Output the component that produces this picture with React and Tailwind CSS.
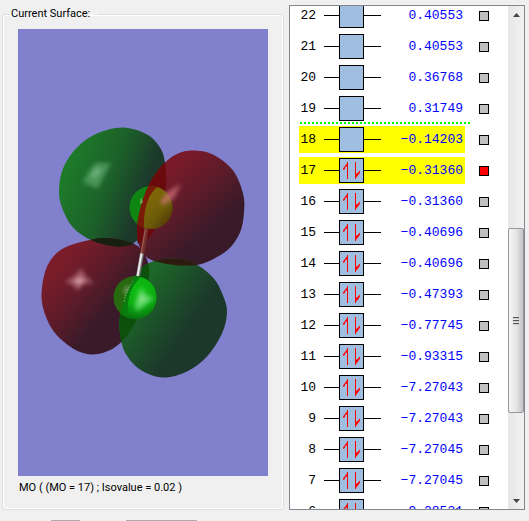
import { useState } from "react";

const ORBITALS = [
  { mo: 22, energy: "0.40553", electrons: 0 },
  { mo: 21, energy: "0.40553", electrons: 0 },
  { mo: 20, energy: "0.36768", electrons: 0 },
  { mo: 19, energy: "0.31749", electrons: 0 },
  { mo: 18, energy: "−0.14203", electrons: 0 },
  { mo: 17, energy: "−0.31360", electrons: 2 },
  { mo: 16, energy: "−0.31360", electrons: 2 },
  { mo: 15, energy: "−0.40696", electrons: 2 },
  { mo: 14, energy: "−0.40696", electrons: 2 },
  { mo: 13, energy: "−0.47393", electrons: 2 },
  { mo: 12, energy: "−0.77745", electrons: 2 },
  { mo: 11, energy: "−0.93315", electrons: 2 },
  { mo: 10, energy: "−7.27043", electrons: 2 },
  { mo: 9, energy: "−7.27043", electrons: 2 },
  { mo: 8, energy: "−7.27045", electrons: 2 },
  { mo: 7, energy: "−7.27045", electrons: 2 },
  { mo: 6, energy: "−9.28531", electrons: 2 },
];

const HIGHLIGHTED = [17, 18];

// outlines of the four lobes
const LOBES = {
  greenTop: [[123, 127], [147, 134], [160, 147], [165, 162], [166, 185], [162, 210], [154, 230], [145, 240], [133, 244], [115, 246], [92, 240], [73, 227], [62, 207], [59, 190], [63, 168], [77, 147], [97, 133]],
  redTop: [[193, 150], [213, 154], [233, 170], [243, 193], [244, 212], [240, 232], [227, 250], [203, 263], [182, 265], [160, 262], [147, 257], [139, 245], [137, 228], [139, 213], [145, 193], [153, 177], [165, 162], [178, 153]],
  redBottom: [[92, 239], [63, 248], [48, 264], [42, 287], [43, 307], [53, 330], [73, 348], [93, 354], [113, 348], [127, 335], [137, 318], [145, 298], [149, 275], [148, 262], [142, 250], [133, 243], [113, 238]],
  greenBottom: [[150, 262], [173, 258], [193, 262], [213, 277], [223, 295], [227, 312], [222, 333], [207, 356], [187, 371], [163, 377], [140, 369], [125, 352], [120, 333], [120, 315], [127, 293], [137, 273]],
};

// closed smooth curve through the points
function smooth(points) {
  const n = points.length;
  let d = `M${points[0][0]} ${points[0][1]}`;
  for (let i = 0; i < n; i++) {
    const p0 = points[(i - 1 + n) % n];
    const p1 = points[i];
    const p2 = points[(i + 1) % n];
    const p3 = points[(i + 2) % n];
    d += `C${p1[0] + (p2[0] - p0[0]) / 6} ${p1[1] + (p2[1] - p0[1]) / 6} ${p2[0] - (p3[0] - p1[0]) / 6} ${p2[1] - (p3[1] - p1[1]) / 6} ${p2[0]} ${p2[1]}`;
  }
  return d + "Z";
}

const greenTop = smooth(LOBES.greenTop);
const redTop = smooth(LOBES.redTop);
const redBottom = smooth(LOBES.redBottom);
const greenBottom = smooth(LOBES.greenBottom);

function SurfaceView() {
  return (
    <svg
      className="block w-full flex-1 min-h-0 bg-[#8080cc]"
      viewBox="18 29 250 446"
      role="img"
      aria-label="Molecular orbital 17"
    >
      <defs>
        <linearGradient id="gTop" gradientUnits="userSpaceOnUse" x1="70" y1="160" x2="146" y2="188">
          <stop offset="0" stopColor="#1d7a29" />
          <stop offset="0.55" stopColor="#1c6029" />
          <stop offset="1" stopColor="#1c382b" />
        </linearGradient>
        <linearGradient id="rTop" gradientUnits="userSpaceOnUse" x1="172" y1="165" x2="222" y2="222">
          <stop offset="0" stopColor="#7a1a29" />
          <stop offset="0.5" stopColor="#5c1b29" />
          <stop offset="1" stopColor="#381a29" />
        </linearGradient>
        <linearGradient id="rBottom" gradientUnits="userSpaceOnUse" x1="62" y1="262" x2="112" y2="306">
          <stop offset="0" stopColor="#7a1c29" />
          <stop offset="0.5" stopColor="#5e1b29" />
          <stop offset="1" stopColor="#3a1a29" />
        </linearGradient>
        <linearGradient id="gBottom" gradientUnits="userSpaceOnUse" x1="138" y1="290" x2="190" y2="326">
          <stop offset="0" stopColor="#1d6829" />
          <stop offset="0.5" stopColor="#1c5029" />
          <stop offset="1" stopColor="#1c382b" />
        </linearGradient>
        <radialGradient id="brightAtom" gradientUnits="userSpaceOnUse" cx="139" cy="290" r="30">
          <stop offset="0" stopColor="#10c014" />
          <stop offset="0.5" stopColor="#0aae10" />
          <stop offset="1" stopColor="#087010" />
        </radialGradient>
        <linearGradient id="oliveAtom" x1="0.2" y1="0.2" x2="0.8" y2="0.9">
          <stop offset="0" stopColor="#806808" />
          <stop offset="0.5" stopColor="#6c5c08" />
          <stop offset="1" stopColor="#482808" />
        </linearGradient>
        <filter id="soft" x="-50%" y="-50%" width="200%" height="200%">
          <feGaussianBlur stdDeviation="2" />
        </filter>
        <clipPath id="inRedTop"><path d={redTop} /></clipPath>
        <clipPath id="inRedBottom"><path d={redBottom} /></clipPath>
        <clipPath id="inGreenBottom"><path d={greenBottom} /></clipPath>
        <clipPath id="inTopAtom"><circle cx="151" cy="207" r="21.500" /></clipPath>
        <clipPath id="inBottomAtom"><circle cx="135" cy="297" r="21.500" /></clipPath>
      </defs>

      <path d={greenTop} fill="url(#gTop)" />
      <path d={redTop} fill="url(#rTop)" />
      <path d={redBottom} fill="url(#rBottom)" />
      <path d={greenBottom} fill="url(#gBottom)" />

      {/* places where two lobes lie over each other */}
      <path d={greenTop} fill="#6a0a0c" clipPath="url(#inRedTop)" />
      <path d={greenTop} fill="#17200e" clipPath="url(#inRedBottom)" />
      <path d={greenBottom} fill="#2f1a10" clipPath="url(#inRedTop)" />
      <path d={redBottom} fill="#0c500c" clipPath="url(#inGreenBottom)" />

      {/* light on the two front lobes */}
      <g filter="url(#soft)">
        <path d="M96 162L111 163L105 174L98 188L83 182L88 172Z" fill="#64b074" opacity="0.6" />
        <path d="M95 167L102 169L96 178L90 177Z" fill="#8cc898" opacity="0.5" />
        <path d="M81 268L86 276L94 283L84 283L78 290L72 284L65 281L74 276Z" fill="#c88490" opacity="0.6" />
        <path d="M79 277L85 280L79 284L74 280Z" fill="#f0c0c8" opacity="0.7" />
      </g>

      {/* bond */}
      <path d="M147.500 222L142 254" stroke="#74302c" strokeWidth="4" />
      <path d="M145.500 228L141 254" stroke="#a8605a" strokeWidth="1" />
      <path d="M142 253L138 276" stroke="#777" strokeWidth="4" />
      <path d="M141.500 253L137.500 276" stroke="#eee" strokeWidth="2" />

      <circle cx="151" cy="207" r="21.500" fill="#0f8611" />
      <g clipPath="url(#inTopAtom)">
        <path d={redTop} fill="#7a1a08" />
        <path d="M144 230C143 208 148 190 163 183H180V232Z" fill="url(#oliveAtom)" />
        <path d="M141 197C139 202 140 207 143 201Z" fill="#b0d090" opacity="0.5" />
      </g>
      <g filter="url(#soft)">
        <path d="M181 183L174 198L162 205L160 201L168 191Z" fill="#d87880" opacity="0.65" />
      </g>

      <circle cx="135" cy="297" r="21.500" fill="#27690f" />
      <g filter="url(#soft)">
        <path d="M127 285L130 288L125 295L124 290Z" fill="#b0b8a0" opacity="0.7" />
      </g>
      <g clipPath="url(#inBottomAtom)">
        <path d={greenBottom} fill="#087c0c" />
        <path d="M129 319C125 298 132 283 142 276L160 276V320Z" fill="url(#brightAtom)" />
        <g filter="url(#soft)">
          <path d="M141 287L146 294L154 298L145 305L136 311L135 302Z" fill="#70e078" opacity="0.75" />
          <path d="M141 294L146 298L139 303Z" fill="#c0f0c0" opacity="0.6" />
        </g>
      </g>
      <path d="M133 281Q126 290 124 302" fill="none" stroke="#8dff8d" strokeWidth="1" strokeDasharray="1 2" />

      {/* background showing through between the lobes */}
      <path d="M133 243L137 240L138 244Z" fill="#8080cc" />
      <path d="M149 258L153 261L149 262Z" fill="#8080cc" />
    </svg>
  );
}

function OrbitalBox({ electrons }) {
  return (
    <span className="flex items-center">
      <span className="w-[15px] h-px bg-black" />
      <span className="w-[25px] h-[25px] border border-black bg-[#a0bee0]">
        {electrons === 2 && (
          <svg className="block" width="23" height="23" viewBox="1 1 23 23" fill="#f00">
            <path d="M8 4H9V21H8Z" shapeRendering="crispEdges" />
            <path d="M9 4L4 10.500V12L6 11V9.500L8.500 8Z" />
            <path d="M16 4H17V21H16Z" shapeRendering="crispEdges" />
            <path d="M16 21V16.500L18.500 15L21 12.500V14.500L19 17.500Z" />
          </svg>
        )}
      </span>
      <span className="w-[17px] h-px bg-black" />
    </span>
  );
}

function OrbitalRow({ orbital, checked, onToggle }) {
  const id = `mo-${orbital.mo}`;
  return (
    <div className="flex items-center h-[27px] shrink-0">
      <label
        htmlFor={id}
        className={
          HIGHLIGHTED.includes(orbital.mo)
            ? "flex flex-1 items-center h-full bg-[#ffff00]"
            : "flex flex-1 items-center h-full"
        }
      >
        <span className="w-[25px] pr-2 flex justify-end text-black">{orbital.mo}</span>
        <OrbitalBox electrons={orbital.electrons} />
        <span className="flex-1 pr-[2px] text-right text-[#0000ff]">{orbital.energy}</span>
      </label>
      <input
        id={id}
        type="checkbox"
        checked={checked}
        onChange={onToggle}
        className="appearance-none w-[10px] h-[10px] ml-[14px] mr-[19px] border border-black bg-[#c0c0c0] checked:bg-[#ff0000]"
      />
    </div>
  );
}

function ScrollBar() {
  return (
    <div className="flex flex-col w-4 bg-linear-to-r from-[#e6e6e6] to-[#f2f2f2]">
      <button type="button" aria-label="Scroll up" className="flex items-center justify-center h-[17px]">
        <svg width="7" height="4" viewBox="0 0 7 4"><path d="M0 4L3.500 0L7 4Z" fill="#444" /></svg>
      </button>
      <div className="flex flex-col flex-1">
        <div className="flex-[206]" />
        <div className="flex flex-[184] items-center justify-center rounded-xs border border-[#979797] bg-linear-to-r from-[#f5f5f5] via-[#e6e6e8] to-[#c4c4c8]">
          <svg width="6" height="8" viewBox="0 0 6 8">
            <path d="M0 .5H6M0 3.500H6M0 6.500H6" stroke="#555" />
            <path d="M0 1.500H6M0 4.500H6M0 7.500H6" stroke="#ccc" />
          </svg>
        </div>
        <div className="flex-[79]" />
      </div>
      <button type="button" aria-label="Scroll down" className="flex items-center justify-center h-[17px]">
        <svg width="7" height="4" viewBox="0 0 7 4"><path d="M0 0L3.500 4L7 0Z" fill="#444" /></svg>
      </button>
    </div>
  );
}

export default function App() {
  const [selected, setSelected] = useState([17]);

  const toggle = (mo) => {
    setSelected(selected.includes(mo) ? selected.filter((m) => m !== mo) : [...selected, mo]);
  };

  return (
    <div className="flex flex-col h-screen overflow-hidden bg-[#f0f0f0] text-black font-[Roboto,Arial,sans-serif] text-[11px]">
      <main className="flex flex-1 min-h-0 gap-[5px] pt-[5px] pl-[2px] pr-1">
        <fieldset className="flex flex-col flex-1 min-w-0 mt-[2px] px-[15px] pb-[13px] rounded-[3px] border border-[#d5dfe5] shadow-[inset_0_0_0_1px_#fff]">
          <legend className="-ml-2 pl-px pr-2 leading-[14px]">Current Surface:</legend>
          <div className="flex flex-col flex-1 min-h-0 pt-2">
            <SurfaceView />
            <p className="pt-1 pl-px leading-4">MO ( (MO = 17) ; Isovalue = 0.02 )</p>
          </div>
        </fieldset>

        <section className="flex w-[236px] border border-[#828790] bg-white" aria-label="Orbital energies">
          <div className="flex flex-col flex-1 overflow-hidden pl-[9px] font-['Liberation_Mono','Courier_New',monospace] text-[13px]">
            <div className="flex flex-col -mt-1">
              {ORBITALS.map((orbital) => (
                <div key={orbital.mo}>
                  <OrbitalRow
                    orbital={orbital}
                    checked={selected.includes(orbital.mo)}
                    onToggle={() => toggle(orbital.mo)}
                  />
                  <div className="h-1 pl-px pr-[38px]">
                    {orbital.mo === 19 && (
                      <div className="h-[2px] bg-[repeating-linear-gradient(90deg,#00ff00_0_2px,transparent_2px_4px)]" />
                    )}
                  </div>
                </div>
              ))}
            </div>
          </div>
          <ScrollBar />
        </section>
      </main>

      {/* top edges of the controls below the fold */}
      <footer className="flex pt-[10px] pl-[51px] gap-[46px]">
        <div className="w-[29px] h-px bg-[#b0adb0]" />
        <div className="w-[71px] h-px bg-[#b0adb0]" />
      </footer>
    </div>
  );
}
